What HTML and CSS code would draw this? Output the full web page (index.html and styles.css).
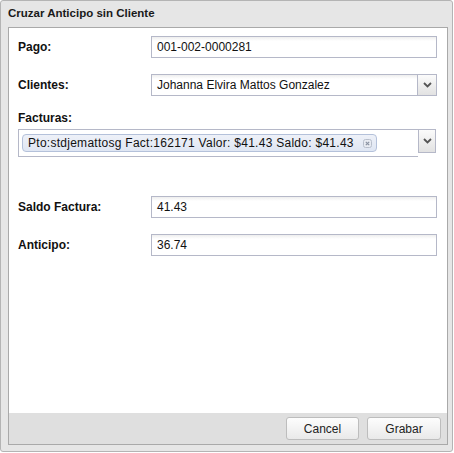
FILE: index.html
```html
<!DOCTYPE html>
<html>
<head>
<meta charset="utf-8">
<link rel="stylesheet" href="styles.css">
</head>
<body>
<div class="window">
  <div class="title">Cruzar Anticipo sin Cliente</div>
  <div class="panel">
    <div class="form">
      <div class="row row-pago">
        <label class="lbl">Pago:</label>
        <div class="field">001-002-0000281</div>
      </div>
      <div class="row row-cli">
        <label class="lbl">Clientes:</label>
        <div class="combo">
          <div class="field combo-field">Johanna Elvira Mattos Gonzalez</div>
          <div class="trigger"><svg width="9" height="6" viewBox="0 0 9 6"><path d="M1 1 L4.5 4.5 L8 1" fill="none" stroke="#555" stroke-width="1.8"/></svg></div>
        </div>
      </div>
      <div class="fact-label lbl">Facturas:</div>
      <div class="multi">
        <div class="tagbox">
          <span class="tag">Pto:stdjemattosg Fact:162171 Valor: $41.43 Saldo: $41.43<span class="x"><svg width="9" height="9" viewBox="0 0 9 9"><rect x="0.5" y="0.5" width="8" height="8" rx="2" fill="#e8ebf2" stroke="#b8bfcc"/><path d="M2.8 2.8 L6.2 6.2 M6.2 2.8 L2.8 6.2" stroke="#8a93a3" stroke-width="1.2"/></svg></span></span>
        </div>
        <div class="trigger trigger-multi"><svg width="9" height="6" viewBox="0 0 9 6"><path d="M1 1 L4.5 4.5 L8 1" fill="none" stroke="#555" stroke-width="1.8"/></svg></div>
      </div>
      <div class="row row-saldo">
        <label class="lbl">Saldo Factura:</label>
        <div class="field">41.43</div>
      </div>
      <div class="row row-ant">
        <label class="lbl">Anticipo:</label>
        <div class="field">36.74</div>
      </div>
    </div>
    <div class="footer">
      <button class="btn btn-cancel">Cancel</button>
      <button class="btn btn-save">Grabar</button>
    </div>
  </div>
</div>
</body>
</html>
```
FILE: styles.css
```css
html, body {
  margin: 0;
  padding: 0;
  background: #fff;
}
body {
  font-family: "Liberation Sans", Arial, sans-serif;
  font-size: 12px;
  color: #000;
}
.window {
  width: 453px;
  height: 452px;
  box-sizing: border-box;
  border: 1px solid #b4b4b4;
  border-radius: 3px;
  background: #e6e6e6;
  display: flex;
  flex-direction: column;
  padding: 0 4px 6px 7px;
}
.title {
  height: 26px;
  line-height: 24px;
  font-weight: bold;
  font-size: 11.5px;
  color: #1a1a1a;
  padding-left: 0;
  flex: none;
}
.panel {
  flex: 1;
  border: 1px solid #a9a9a9;
  background: #fff;
  display: flex;
  flex-direction: column;
}
.form {
  flex: 1;
  padding: 8px 10px 0 9px;
}
.row {
  display: flex;
  align-items: center;
}
.lbl {
  width: 133px;
  flex: none;
  font-weight: bold;
  font-size: 12px;
  color: #111;
}
.field {
  flex: 1;
  height: 22px;
  line-height: 21px;
  box-sizing: border-box;
  border: 1px solid #b5b8c8;
  background: #fff linear-gradient(#eee, #fff 4px);
  padding-left: 5px;
  font-size: 12px;
  color: #111;
}
.row-cli { margin-top: 16px; }
.combo {
  flex: 1;
  display: flex;
}
.combo-field { border-right: none; }
.trigger {
  width: 20px;
  height: 22px;
  box-sizing: border-box;
  border: 1px solid #b5b8c8;
  background: linear-gradient(#fbfbfb, #e2e2e2);
  display: flex;
  align-items: center;
  justify-content: center;
  flex: none;
}
.fact-label {
  margin-top: 15px;
  width: auto;
  line-height: 14px;
}
.multi {
  display: flex;
  margin-top: 4px;
}
.tagbox {
  width: 400px;
  height: 28px;
  box-sizing: border-box;
  border: 1px solid #b5b8c8;
  border-right: none;
  padding: 4px 0 0 3px;
}
.tag {
  display: inline-flex;
  align-items: center;
  height: 18px;
  box-sizing: border-box;
  border: 1px solid #b4c1da;
  border-radius: 4px;
  background: linear-gradient(#eef1f8, #dfe6f3);
  padding: 0 4px 0 5px;
  font-size: 12px;
  letter-spacing: 0.27px;
  color: #111;
}
.x {
  display: inline-flex;
  margin-left: 9px;
}
.trigger-multi {
  width: 18px;
  height: 24px;
}
.row-saldo { margin-top: 39px; }
.row-ant { margin-top: 16px; }
.footer {
  height: 31px;
  flex: none;
  background: #dfdfdf;
  display: flex;
  justify-content: flex-end;
  align-items: center;
  gap: 8px;
  padding-right: 6px;
}
.btn {
  height: 23px;
  border: 1px solid #bdbdbd;
  border-radius: 3px;
  background: linear-gradient(#fdfdfd, #e9e9e9);
  font-family: "Liberation Sans", Arial, sans-serif;
  font-size: 12px;
  color: #222;
  padding: 0;
}
.btn-cancel { width: 73px; }
.btn-save { width: 74px; }
```
